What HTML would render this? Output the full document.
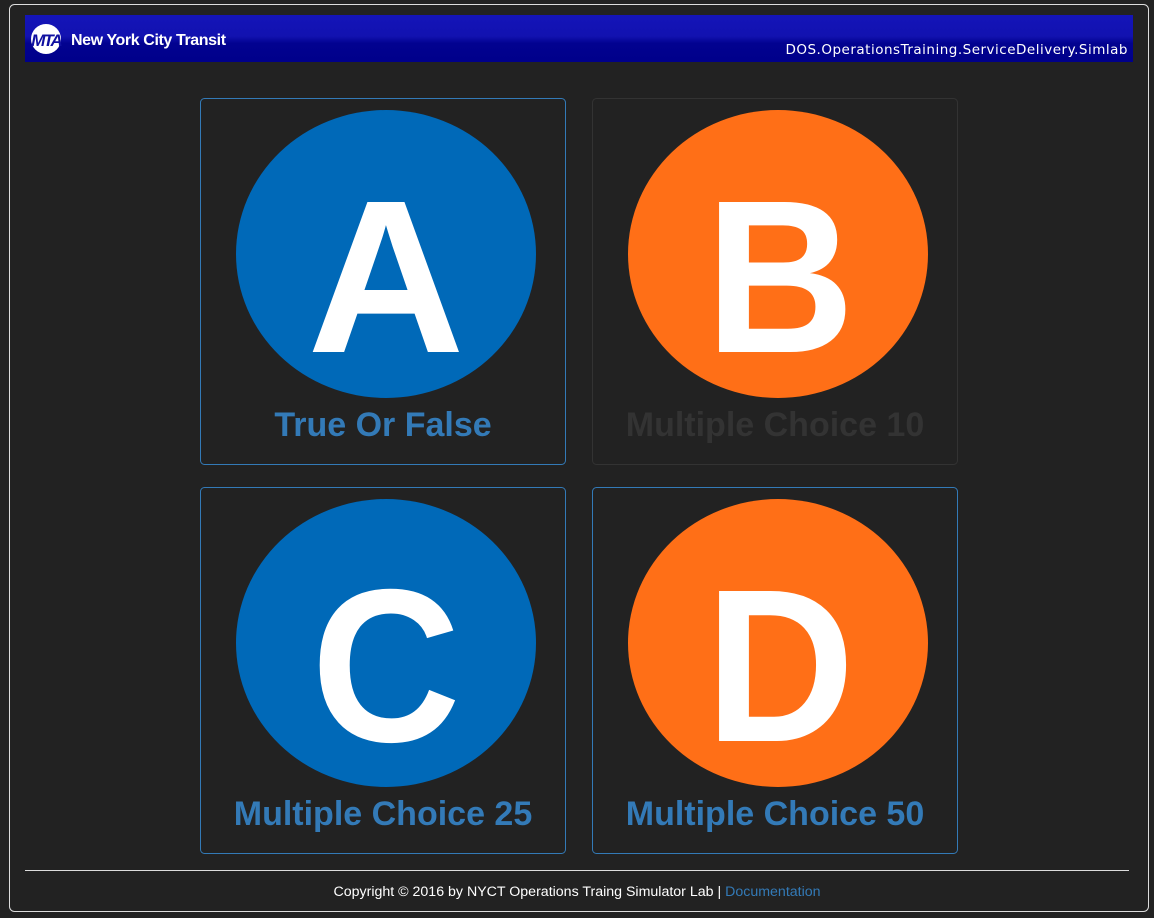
<!DOCTYPE html>
<html><head><meta charset="utf-8"><style>
html,body{margin:0;padding:0;background:#222;width:1154px;height:918px;overflow:hidden;font-family:"Liberation Sans",Arial,sans-serif}
</style></head><body>
<svg width="1154" height="918" xmlns="http://www.w3.org/2000/svg" style="display:block">
<defs>
<linearGradient id="hg" x1="0" y1="0" x2="0" y2="1">
<stop offset="0" stop-color="#1414b8"/><stop offset="0.45" stop-color="#1212b0"/><stop offset="0.6" stop-color="#020290"/><stop offset="1" stop-color="#00008a"/>
</linearGradient>
</defs>
<rect x="9.5" y="4.5" width="1139" height="907" rx="5" fill="#222" stroke="#ddd" stroke-width="1"/>
<rect x="25" y="15" width="1108" height="47" fill="url(#hg)"/>
<circle cx="46" cy="39" r="15" fill="#fff"/>
<text x="46" y="46" font-family="Liberation Sans" font-weight="bold" font-size="17" fill="#1010a0" text-anchor="middle" letter-spacing="-2" font-style="italic">MTA</text>
<text x="71" y="45" font-family="Liberation Sans" font-weight="bold" font-size="16" fill="#fff" letter-spacing="-0.4">New York City Transit</text>
<text x="1128" y="54" font-family="DejaVu Sans" font-size="13.5" fill="#fff" text-anchor="end" letter-spacing="0.5">DOS.OperationsTraining.ServiceDelivery.Simlab</text>

<rect x="200.5" y="98.5" width="365" height="366" rx="4" fill="none" stroke="#337ab7"/>
<ellipse cx="386" cy="254" rx="150" ry="144" fill="#0069b8"/>
<text x="386" y="352" font-family="Liberation Sans" font-weight="bold" font-size="218" fill="#fff" text-anchor="middle">A</text>
<text x="383" y="436" font-family="Liberation Sans" font-weight="bold" font-size="34" fill="#337ab7" text-anchor="middle">True Or False</text>

<rect x="592.5" y="98.5" width="365" height="366" rx="4" fill="none" stroke="#333"/>
<ellipse cx="778" cy="254" rx="150" ry="144" fill="#ff6f17"/>
<text x="780" y="352" font-family="Liberation Sans" font-weight="bold" font-size="218" fill="#fff" text-anchor="middle" transform="translate(780 0) scale(0.95 1) translate(-780 0)">B</text>
<text x="775" y="436" font-family="Liberation Sans" font-weight="bold" font-size="34" fill="#333" text-anchor="middle">Multiple Choice 10</text>

<rect x="200.5" y="487.5" width="365" height="366" rx="4" fill="none" stroke="#337ab7"/>
<ellipse cx="386" cy="643" rx="150" ry="144" fill="#0069b8"/>
<text x="386" y="741" font-family="Liberation Sans" font-weight="bold" font-size="218" fill="#fff" text-anchor="middle" transform="translate(386 0) scale(0.95 1) translate(-386 0)">C</text>
<text x="383" y="825" font-family="Liberation Sans" font-weight="bold" font-size="34" fill="#337ab7" text-anchor="middle">Multiple Choice 25</text>

<rect x="592.5" y="487.5" width="365" height="366" rx="4" fill="none" stroke="#337ab7"/>
<ellipse cx="778" cy="643" rx="150" ry="144" fill="#ff6f17"/>
<text x="780" y="741" font-family="Liberation Sans" font-weight="bold" font-size="218" fill="#fff" text-anchor="middle" transform="translate(780 0) scale(0.95 1) translate(-780 0)">D</text>
<text x="775" y="825" font-family="Liberation Sans" font-weight="bold" font-size="34" fill="#337ab7" text-anchor="middle">Multiple Choice 50</text>

<line x1="25" y1="870.5" x2="1129" y2="870.5" stroke="#ddd"/>
<text x="577" y="896" font-family="Liberation Sans" font-size="14.2" fill="#fff" text-anchor="middle">Copyright © 2016 by NYCT Operations Traing Simulator Lab | <tspan fill="#337ab7">Documentation</tspan></text>
</svg>
</body></html>
